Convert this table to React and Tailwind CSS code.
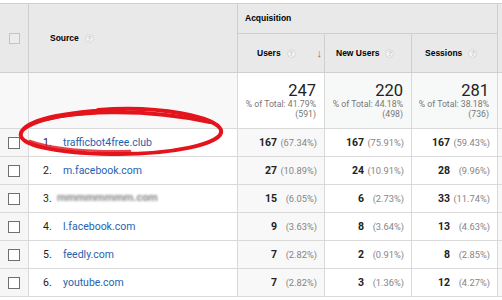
import React from "react";

const rows = [
  { n: 1, src: "trafficbot4free.club", u: ["167", "(67.34%)"], nu: ["167", "(75.91%)"], s: ["167", "(59.43%)"] },
  { n: 2, src: "m.facebook.com", u: ["27", "(10.89%)"], nu: ["24", "(10.91%)"], s: ["28", "(9.96%)"] },
  { n: 3, src: null, u: ["15", "(6.05%)"], nu: ["6", "(2.73%)"], s: ["33", "(11.74%)"] },
  { n: 4, src: "l.facebook.com", u: ["9", "(3.63%)"], nu: ["8", "(3.64%)"], s: ["13", "(4.63%)"] },
  { n: 5, src: "feedly.com", u: ["7", "(2.82%)"], nu: ["2", "(0.91%)"], s: ["8", "(2.85%)"] },
  { n: 6, src: "youtube.com", u: ["7", "(2.82%)"], nu: ["3", "(1.36%)"], s: ["12", "(4.27%)"] },
];

const totals = [
  { big: "247", pct: "% of Total: 41.79%", all: "(591)", bg: "bg-white" },
  { big: "220", pct: "% of Total: 44.18%", all: "(498)", bg: "bg-[#f7f9f9]" },
  { big: "281", pct: "% of Total: 38.18%", all: "(736)", bg: "bg-[#f7f9f9]" },
];

const head = "font-['Liberation_Sans',sans-serif] text-[8.5px] font-bold text-black";

function Help() {
  return (
    <span className="ml-[6px] inline-flex h-[9px] w-[9px] items-center justify-center rounded-full border border-[#d6d6d6] bg-[#f4f4f4] text-[7px] font-bold leading-none text-[#c6c6c6]">
      ?
    </span>
  );
}

function Check({ head }) {
  return (
    <span
      className={
        head
          ? "block h-[11px] w-[11px] border border-[#c4c4c4] bg-[#ececec]"
          : "block h-[12px] w-[12px] border border-[#6f6f6f] bg-white"
      }
    />
  );
}

function Val({ v, bg }) {
  return (
    <div className={`flex items-center justify-end border-b border-r border-[#d9d9d9] pr-[7px] ${bg}`}>
      <span className="text-[10.5px] font-bold text-[#222]">{v[0]}</span>
      <span className="w-[40px] text-right text-[9.3px] text-[#858585]">{v[1]}</span>
    </div>
  );
}

export default function App() {
  return (
    <div className="relative h-[300px] w-[502px] overflow-hidden bg-white pt-[3px] font-['Roboto',sans-serif]">
      <div className="grid grid-cols-[29px_209px_87px_87px_86px_1fr] border-t border-[#cfcfcf]">
        {/* header */}
        <div className="row-span-2 flex items-center justify-center border-b border-r border-[#cfcfcf] bg-[#e9e9e9]">
          <Check head />
        </div>
        <div className={`row-span-2 flex items-center border-b border-r border-[#cfcfcf] bg-[#e9e9e9] pl-[21px] ${head}`}>
          Source
          <Help />
        </div>
        <div className={`col-span-3 flex h-[30px] items-center border-b border-r border-[#cfcfcf] bg-[#e9e9e9] pl-[7px] ${head}`}>
          Acquisition
        </div>
        <div className="row-span-2 border-b border-[#cfcfcf] bg-[#e9e9e9]" />
        <div className={`flex h-[39px] items-center border-b border-r border-[#cfcfcf] bg-[#e9e9e9] pl-[19px] ${head}`}>
          Users
          <Help />
          <span className="ml-auto mr-[2px] text-[11px] font-bold text-[#777]">↓</span>
        </div>
        <div className={`flex items-center border-b border-r border-[#cfcfcf] bg-[#e9e9e9] pl-[11px] ${head}`}>
          New Users
          <Help />
        </div>
        <div className={`flex items-center border-b border-r border-[#cfcfcf] bg-[#e9e9e9] pl-[13px] ${head}`}>
          Sessions
          <Help />
        </div>

        {/* totals */}
        <div className="h-[56px] border-b border-r border-[#d9d9d9] bg-[#f8f8f8]" />
        <div className="border-b border-r border-[#d9d9d9] bg-[#f8f8f8]" />
        {totals.map((t) => (
          <div
            key={t.big}
            className={`flex flex-col items-end whitespace-nowrap border-b border-r border-[#d9d9d9] pr-[8px] pt-[10px] ${t.bg}`}
          >
            <span className="text-[16.5px] leading-[16px] text-[#222]">{t.big}</span>
            <span className="text-[8.7px] leading-[10px] text-[#777]">{t.pct}</span>
            <span className="text-[8.7px] leading-[10px] text-[#777]">{t.all}</span>
          </div>
        ))}
        <div className="border-b border-[#d9d9d9] bg-[#f8f8f8]" />

        {/* rows */}
        {rows.map((r) => (
          <React.Fragment key={r.n}>
            <div className="flex h-[28px] items-center justify-center border-b border-r border-[#d9d9d9] bg-[#f6f6f6]">
              <Check />
            </div>
            <div className="flex items-center whitespace-nowrap border-b border-r border-[#d9d9d9] bg-white pl-[14px] text-[10.5px]">
              <span className="w-[20px] text-[#222]">{r.n}.</span>
              {r.src ? (
                <span className="text-[#1f62b0]">{r.src}</span>
              ) : (
                <span className="-ml-[6px] text-[11px] font-bold text-[#8a8a8a] blur-[1.2px]">mmmmmmmm.com</span>
              )}
            </div>
            <Val v={r.u} bg="bg-[#f8f8f8]" />
            <Val v={r.nu} bg="bg-white" />
            <Val v={r.s} bg="bg-white" />
            <div className="border-b border-[#d9d9d9] bg-[#f8f8f8]" />
          </React.Fragment>
        ))}
      </div>

      {/* red marker circle */}
      <svg className="pointer-events-none absolute left-0 top-0" width="502" height="300" viewBox="0 0 502 300">
        <g fill="none" stroke="#e3141b" strokeLinecap="round">
          <path
            d="M98 110 C160 105 216 117 221 130 C225 144 170 155 110 154 C55 153 17 145 21 133 C25 121 60 112 125 109"
            strokeWidth="4"
          />
          <path d="M36 122 C70 111 140 107 210 122" strokeWidth="4" />
          <path d="M24 129 C40 117 80 112 125 111" strokeWidth="3.5" />
          <path d="M30 141 C50 149 90 152 130 151" strokeWidth="2.5" opacity="0.8" />
        </g>
      </svg>
    </div>
  );
}
